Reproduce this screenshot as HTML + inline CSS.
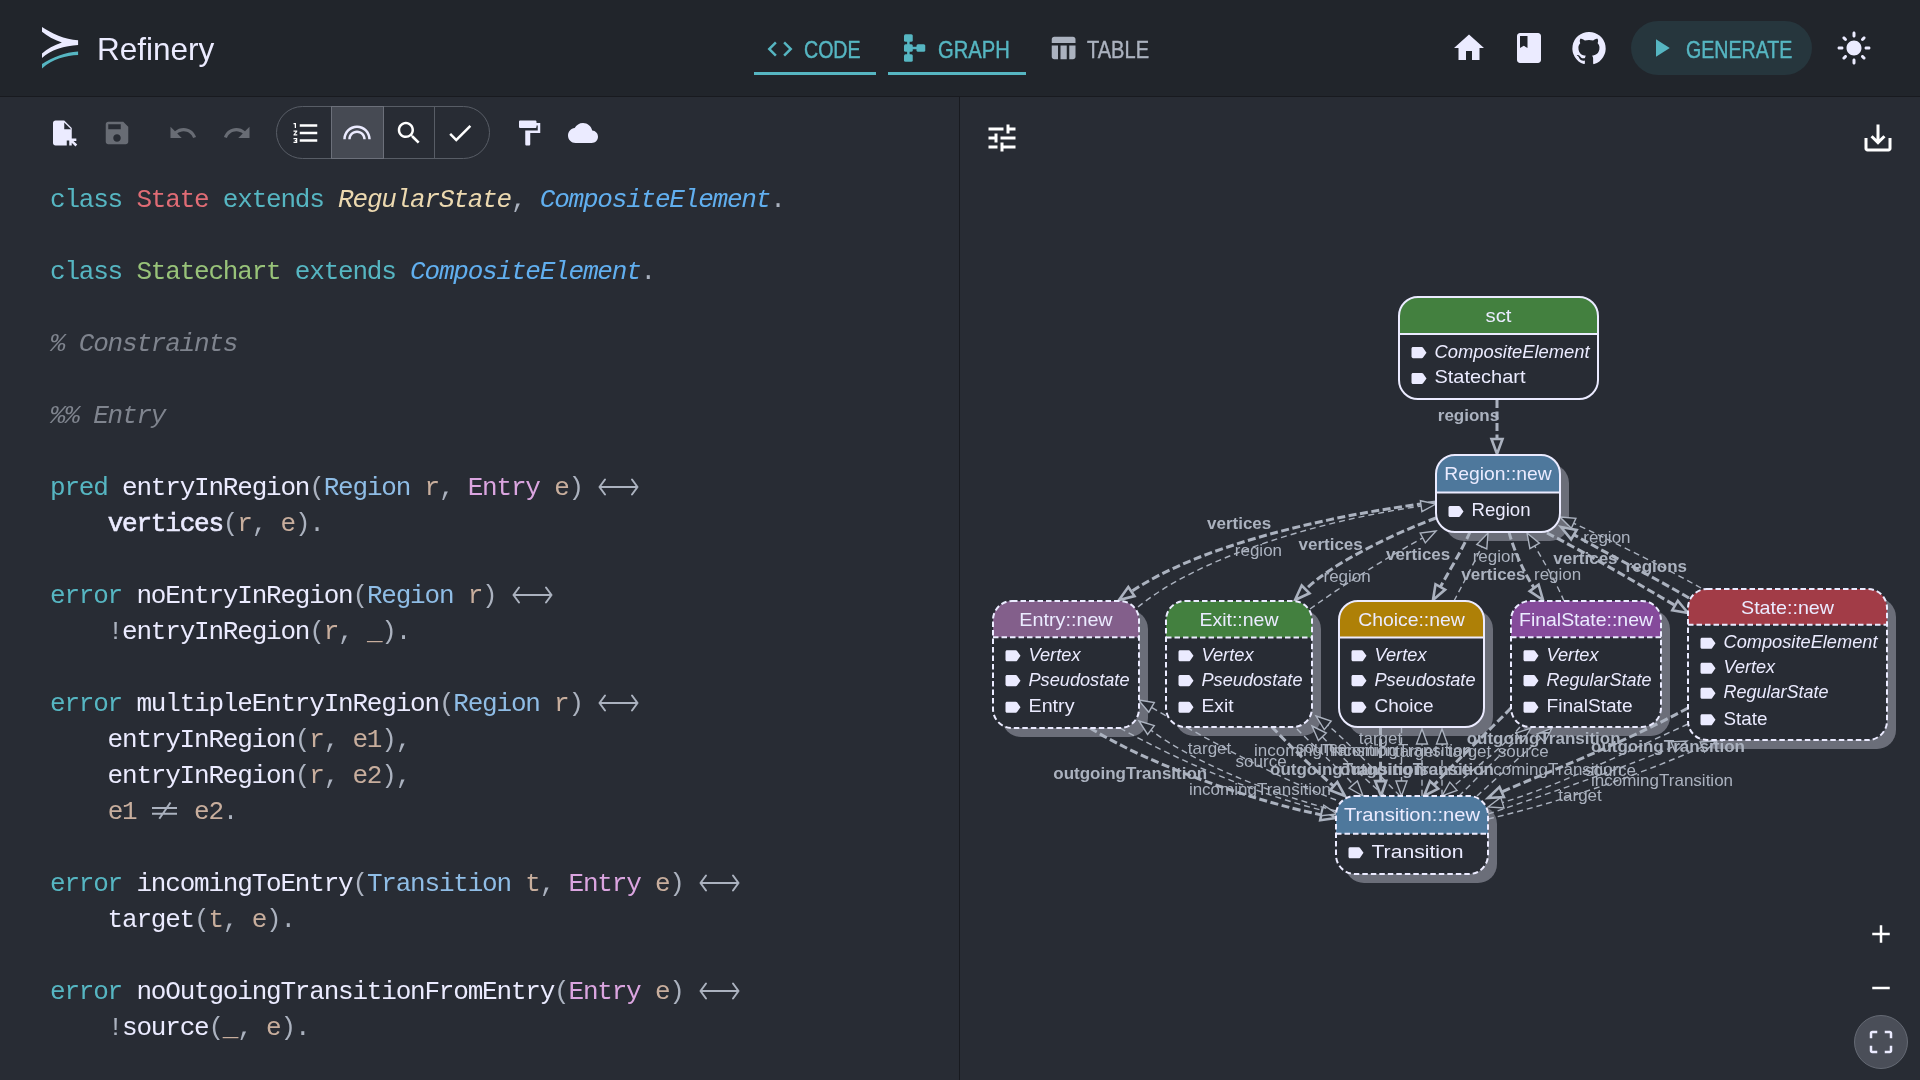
<!DOCTYPE html>
<html><head><meta charset="utf-8">
<style>
html,body{margin:0;padding:0;width:1920px;height:1080px;overflow:hidden;background:#282c34;}
body{position:relative;font-family:"Liberation Sans",sans-serif;color:#ebebff;}
#root{position:absolute;left:0;top:0;width:1920px;height:1080px;will-change:transform;background:#282c34;}
.abs{position:absolute;}
#hdr{position:absolute;left:0;top:0;width:1920px;height:96px;background:#21252b;}
#hdrline{position:absolute;left:0;top:96px;width:1920px;height:1px;background:#181a1f;}
#vdiv{position:absolute;left:959px;top:97px;width:1px;height:983px;background:#181a1f;}
svg.ic{position:absolute;overflow:visible;}
.tab{position:absolute;font-size:24px;-webkit-text-stroke:0.45px currentColor;white-space:pre;transform-origin:0 0;}
.code{position:absolute;left:50px;top:182px;font-family:"Liberation Mono",monospace;font-size:26px;letter-spacing:-1.2px;line-height:36px;white-space:pre;color:#ebebff;}
.code div{height:36px;}
.k{color:#56b6c2}.p{color:#c8ae9d}.g{color:#abb2bf}.c{color:#7f848e;font-style:italic}
.i{font-style:italic}
.arr{display:inline-block;width:43.2px;height:36px;vertical-align:top;position:relative;}
.arr svg{position:absolute;left:0;top:0;}
</style></head>
<body><div id="root">
<div id="hdr"></div>
<div id="hdrline"></div>
<div id="vdiv"></div>

<!-- logo -->
<svg class="ic" style="left:41px;top:26px" width="38" height="44" viewBox="0 0 38 44">
  <path d="M1 0.9C10 7 24 13.5 37.1 14.3L37.1 18.9C24 19.5 9 24 1 32.1L1 27.5C6 23 13 19 20.9 16.4C13 13.5 6 10 1 5.7Z" fill="#ebebff"/>
  <path d="M37.1 25.6L37.1 29.1C25 29.5 12 33 1 42.5L1 38.1C12 31 24 26.5 37.1 25.6Z" fill="#56b6c2"/>
</svg>
<div class="abs" style="left:97px;top:29.4px;font-size:31.5px;line-height:40px;color:#ebebff;white-space:pre">Refinery</div>

<!-- tabs -->
<svg class="ic" style="left:765px;top:34px" width="30" height="30" viewBox="0 0 24 24"><path fill="#56b6c2" d="M9.4 16.6L4.8 12l4.6-4.6L8 6l-6 6 6 6 1.4-1.4zm5.2 0l4.6-4.6-4.6-4.6L16 6l6 6-6 6-1.4-1.4z"/></svg>
<div class="tab" style="left:804px;top:35.5px;color:#56b6c2;transform:scaleX(0.815)">CODE</div>
<div class="abs" style="left:754px;top:72px;width:122px;height:3px;background:#56b6c2"></div>
<svg class="ic" style="left:899px;top:33px" width="30" height="30" viewBox="0 0 24 24"><g fill="#56b6c2"><rect x="4" y="1" width="7" height="6" rx="1.2"/><rect x="4" y="9" width="7" height="6" rx="1.2"/><rect x="4" y="17" width="7" height="6" rx="1.2"/><rect x="14" y="9" width="7" height="6" rx="1.2"/><rect x="6.5" y="6" width="2" height="12"/><rect x="10" y="11" width="5" height="2"/></g></svg>
<div class="tab" style="left:938px;top:35.5px;color:#56b6c2;transform:scaleX(0.84)">GRAPH</div>
<div class="abs" style="left:888px;top:72px;width:138px;height:3px;background:#56b6c2"></div>
<svg class="ic" style="left:1048px;top:33px" width="30" height="30" viewBox="0 0 24 24"><path fill="#abb2bf" d="M10 10.02h5V21h-5zM17 21h3c1.1 0 2-.9 2-2v-9h-5v11zm3-18H5c-1.1 0-2 .9-2 2v3h19V5c0-1.1-.9-2-2-2zM3 19c0 1.1.9 2 2 2h3V10H3v9z"/></svg>
<div class="tab" style="left:1087px;top:35.5px;color:#abb2bf;transform:scaleX(0.835)">TABLE</div>

<!-- right header icons -->
<svg class="ic" style="left:1451px;top:30px" width="36" height="36" viewBox="0 0 24 24"><path fill="#ebebff" d="M10 20v-6h4v6h5v-8h3L12 3 2 12h3v8z"/></svg>
<svg class="ic" style="left:1511px;top:30px" width="36" height="36" viewBox="0 0 24 24"><path fill="#ebebff" fill-rule="evenodd" d="M18 2H6c-1.1 0-2 .9-2 2v16c0 1.1.9 2 2 2h12c1.1 0 2-.9 2-2V4c0-1.1-.9-2-2-2zM6 4h5v8l-2.5-1.5L6 12V4z"/></svg>
<svg class="ic" style="left:1571px;top:30px" width="36" height="36" viewBox="0 0 24 24"><path fill="#ebebff" d="M12 1.27a11 11 0 00-3.48 21.46c.55.09.73-.24.73-.53v-1.85c-3.03.64-3.67-1.46-3.67-1.46-.55-1.29-1.28-1.65-1.28-1.65-.92-.65.1-.65.1-.65 1.1 0 1.73 1.1 1.73 1.1.92 1.65 2.57 1.2 3.21.92a2 2 0 01.64-1.47c-2.47-.27-5.04-1.19-5.04-5.5 0-1.1.46-2.1 1.2-2.84a3.76 3.76 0 010-2.93s.91-.28 3.11 1.1c1.8-.49 3.7-.49 5.5 0 2.1-1.38 3.02-1.1 3.02-1.1a3.76 3.76 0 010 2.93c.83.74 1.2 1.74 1.2 2.94 0 4.21-2.57 5.13-5.04 5.4.45.37.82.92.82 2.02v3.03c0 .27.1.64.73.55A11 11 0 0012 1.27"/></svg>
<div class="abs" style="left:1631px;top:21px;width:181px;height:54px;border-radius:27px;background:#26363d"></div>
<svg class="ic" style="left:1646px;top:33px" width="30" height="30" viewBox="0 0 24 24"><path fill="#56b6c2" d="M8 5v14l11-7z"/></svg>
<div class="tab" style="left:1686px;top:35.5px;color:#56b6c2;transform:scaleX(0.817)">GENERATE</div>
<svg class="ic" style="left:1836px;top:30px" width="36" height="36" viewBox="0 0 24 24"><path fill="#ebebff" d="M12 7c-2.76 0-5 2.24-5 5s2.24 5 5 5 5-2.24 5-5-2.24-5-5-5zM2 13h2c.55 0 1-.45 1-1s-.45-1-1-1H2c-.55 0-1 .45-1 1s.45 1 1 1zm18 0h2c.55 0 1-.45 1-1s-.45-1-1-1h-2c-.55 0-1 .45-1 1s.45 1 1 1zM11 2v2c0 .55.45 1 1 1s1-.45 1-1V2c0-.55-.45-1-1-1s-1 .45-1 1zm0 18v2c0 .55.45 1 1 1s1-.45 1-1v-2c0-.55-.45-1-1-1s-1 .45-1 1zM5.99 4.58c-.39-.39-1.03-.39-1.41 0-.39.39-.39 1.03 0 1.41l1.06 1.06c.39.39 1.03.39 1.41 0s.39-1.03 0-1.41L5.990 4.58zm12.37 12.37c-.39-.39-1.030-.39-1.41 0-.39.39-.39 1.03 0 1.41l1.06 1.06c.39.39 1.03.39 1.41 0 .39-.39.39-1.03 0-1.41l-1.06-1.06zm1.06-10.96c.39-.39.39-1.03 0-1.41-.39-.39-1.03-.39-1.41 0l-1.06 1.06c-.39.39-.39 1.03 0 1.41s1.03.39 1.41 0l1.06-1.06zM7.05 18.36c.39-.39.39-1.03 0-1.41-.39-.39-1.03-.39-1.41 0l-1.06 1.06c-.39.39-.39 1.03 0 1.41s1.03.39 1.41 0l1.06-1.06z"/></svg>

<!-- editor toolbar -->
<svg class="ic" style="left:48px;top:118px" width="30" height="30" viewBox="0 0 24 24"><path fill="#ebebff" fill-rule="evenodd" d="M15 2H6c-1.1 0-2 .9-2 2v16c0 1.1.89 2 1.99 2H15v-4h4V8l-6-6zM13 9V3.5L18.5 9H13z"/><path fill="#ebebff" d="M17 16.34h5.66v2h-2.24l2.95 2.95-1.41 1.41L19 19.76V22h-2z"/></svg>
<svg class="ic" style="left:102px;top:118px" width="30" height="30" viewBox="0 0 24 24"><path fill="#686c74" d="M17 3H5c-1.11 0-2 .9-2 2v14c0 1.1.89 2 2 2h14c1.1 0 2-.9 2-2V7l-4-4zm-5 16c-1.66 0-3-1.34-3-3s1.34-3 3-3 3 1.34 3 3-1.34 3-3 3zm3-10H5V5h10v4z"/></svg>
<svg class="ic" style="left:168px;top:118px" width="30" height="30" viewBox="0 0 24 24"><path fill="#686c74" d="M12.5 8c-2.65 0-5.05.99-6.9 2.6L2 7v9h9l-3.62-3.62c1.39-1.16 3.160-1.88 5.12-1.88 3.54 0 6.55 2.31 7.6 5.5l2.37-.78C21.08 11.03 17.15 8 12.5 8z"/></svg>
<svg class="ic" style="left:222px;top:118px" width="30" height="30" viewBox="0 0 24 24"><path fill="#686c74" d="M18.4 10.6C16.55 8.99 14.15 8 11.5 8c-4.65 0-8.58 3.03-9.96 7.22L3.9 16c1.05-3.19 4.05-5.5 7.6-5.5 1.95 0 3.73.72 5.12 1.88L13 16h9V7l-3.6 3.6z"/></svg>
<!-- toggle group -->
<div class="abs" style="left:276px;top:106px;width:212px;height:51px;border:1px solid #585d66;border-radius:27px;"></div>
<div class="abs" style="left:331px;top:106px;width:51px;height:51px;background:#464a53;border:1px solid #6c707a;"></div>
<div class="abs" style="left:434px;top:107px;width:1px;height:51px;background:#585d66;"></div>
<svg class="ic" style="left:291px;top:118px" width="30" height="30" viewBox="0 0 24 24"><path fill="#ffffff" d="M2 17h2v.5H3v1h1v.5H2v1h3v-4H2v1zm1-9h1V4H2v1h1v3zm-1 3h1.8L2 13.1v.9h3v-1H3.2L5 10.9V10H2v1zm5-6v2h14V5H7zm0 14h14v-2H7v2zm0-6h14v-2H7v2z"/></svg>
<svg class="ic" style="left:342px;top:118px" width="30" height="30" viewBox="0 0 24 24"><path fill="#ebebff" d="M12 10c-3.86 0-7 3.14-7 7h2c0-2.76 2.24-5 5-5s5 2.24 5 5h2c0-3.86-3.14-7-7-7zm0-4C5.93 6 1 10.93 1 17h2c0-4.96 4.04-9 9-9s9 4.04 9 9h2c0-6.070-4.93-11-11-11z"/></svg>
<svg class="ic" style="left:394px;top:118px" width="30" height="30" viewBox="0 0 24 24"><path fill="#ffffff" d="M15.5 14h-.79l-.28-.27C15.41 12.59 16 11.11 16 9.5 16 5.91 13.09 3 9.5 3S3 5.91 3 9.5 5.91 16 9.5 16c1.61 0 3.09-.59 4.23-1.57l.27.28v.79l5 4.99L20.49 19l-4.99-5zm-6 0C7.01 14 5 11.99 5 9.5S7.01 5 9.5 5 14 7.01 14 9.5 11.99 14 9.5 14z"/></svg>
<svg class="ic" style="left:445px;top:118px" width="30" height="30" viewBox="0 0 24 24"><path fill="#ffffff" d="M9 16.17L4.83 12l-1.42 1.41L9 19 21 7l-1.41-1.41z"/></svg>
<svg class="ic" style="left:514px;top:118px" width="30" height="30" viewBox="0 0 24 24"><path fill="#ebebff" d="M18 4V3c0-.55-.45-1-1-1H5c-.55 0-1 .45-1 1v4c0 .55.45 1 1 1h12c.55 0 1-.45 1-1V6h1v4H9v11c0 .55.45 1 1 1h2c.55 0 1-.45 1-1v-9h8V4h-3z"/></svg>
<svg class="ic" style="left:568px;top:118px" width="30" height="30" viewBox="0 0 24 24"><path fill="#ebebff" d="M19.35 10.04C18.67 6.59 15.64 4 12 4 9.11 4 6.6 5.64 5.35 8.04 2.34 8.36 0 10.91 0 14c0 3.31 2.69 6 6 6h13c2.76 0 5-2.24 5-5 0-2.64-2.05-4.78-4.65-4.96z"/></svg>

<!--CODE-->
<div class="code"><div><span class="k">class</span> <span style="color:#e06c75">State</span> <span class="k">extends</span> <span class="i" style="color:#ecd9b0">RegularState</span><span class="g">,</span> <span class="i" style="color:#61afef">CompositeElement</span><span class="g">.</span></div><div></div><div><span class="k">class</span> <span style="color:#98c379">Statechart</span> <span class="k">extends</span> <span class="i" style="color:#61afef">CompositeElement</span><span class="g">.</span></div><div></div><div><span class="c">% Constraints</span></div><div></div><div><span class="c">%% Entry</span></div><div></div><div><span class="k">pred</span> entryInRegion<span class="g">(</span><span style="color:#8fbde6">Region</span> <span class="p">r</span><span class="g">,</span> <span style="color:#dba5e0">Entry</span> <span class="p">e</span><span class="g">)</span> <span class="arr"><svg width="43" height="36" viewBox="0 0 43 36"><path d="M2.5 17H40.5M8 9.5L2.5 17L8 24.5M35 9.5L40.5 17L35 24.5" fill="none" stroke="#abb2bf" stroke-width="2" stroke-linejoin="round" stroke-linecap="round"/></svg></span></div><div>    <span style="-webkit-text-stroke:0.6px #ebebff">vertices</span><span class="g">(</span><span class="p">r</span><span class="g">,</span> <span class="p">e</span><span class="g">).</span></div><div></div><div><span class="k">error</span> noEntryInRegion<span class="g">(</span><span style="color:#8fbde6">Region</span> <span class="p">r</span><span class="g">)</span> <span class="arr"><svg width="43" height="36" viewBox="0 0 43 36"><path d="M2.5 17H40.5M8 9.5L2.5 17L8 24.5M35 9.5L40.5 17L35 24.5" fill="none" stroke="#abb2bf" stroke-width="2" stroke-linejoin="round" stroke-linecap="round"/></svg></span></div><div>    <span class="g">!</span>entryInRegion<span class="g">(</span><span class="p">r</span><span class="g">,</span> <span class="p">_</span><span class="g">).</span></div><div></div><div><span class="k">error</span> multipleEntryInRegion<span class="g">(</span><span style="color:#8fbde6">Region</span> <span class="p">r</span><span class="g">)</span> <span class="arr"><svg width="43" height="36" viewBox="0 0 43 36"><path d="M2.5 17H40.5M8 9.5L2.5 17L8 24.5M35 9.5L40.5 17L35 24.5" fill="none" stroke="#abb2bf" stroke-width="2" stroke-linejoin="round" stroke-linecap="round"/></svg></span></div><div>    entryInRegion<span class="g">(</span><span class="p">r</span><span class="g">,</span> <span class="p">e1</span><span class="g">),</span></div><div>    entryInRegion<span class="g">(</span><span class="p">r</span><span class="g">,</span> <span class="p">e2</span><span class="g">),</span></div><div>    <span class="p">e1</span> <span class="arr" style="width:28.8px"><svg width="29" height="36" viewBox="0 0 29 36"><path d="M1 14H26M1 19.8H26M19.5 8.5L8.3 24.8" fill="none" stroke="#abb2bf" stroke-width="2"/></svg></span> <span class="p">e2</span><span class="g">.</span></div><div></div><div><span class="k">error</span> incomingToEntry<span class="g">(</span><span style="color:#8fbde6">Transition</span> <span class="p">t</span><span class="g">,</span> <span style="color:#dba5e0">Entry</span> <span class="p">e</span><span class="g">)</span> <span class="arr"><svg width="43" height="36" viewBox="0 0 43 36"><path d="M2.5 17H40.5M8 9.5L2.5 17L8 24.5M35 9.5L40.5 17L35 24.5" fill="none" stroke="#abb2bf" stroke-width="2" stroke-linejoin="round" stroke-linecap="round"/></svg></span></div><div>    target<span class="g">(</span><span class="p">t</span><span class="g">,</span> <span class="p">e</span><span class="g">).</span></div><div></div><div><span class="k">error</span> noOutgoingTransitionFromEntry<span class="g">(</span><span style="color:#dba5e0">Entry</span> <span class="p">e</span><span class="g">)</span> <span class="arr"><svg width="43" height="36" viewBox="0 0 43 36"><path d="M2.5 17H40.5M8 9.5L2.5 17L8 24.5M35 9.5L40.5 17L35 24.5" fill="none" stroke="#abb2bf" stroke-width="2" stroke-linejoin="round" stroke-linecap="round"/></svg></span></div><div>    <span class="g">!</span>source<span class="g">(</span><span class="p">_</span><span class="g">,</span> <span class="p">e</span><span class="g">).</span></div></div>
<!-- graph panel controls -->
<svg class="ic" style="left:984px;top:120px" width="36" height="36" viewBox="0 0 24 24"><path fill="#ffffff" d="M3 17v2h6v-2H3zM3 5v2h10V5H3zm10 16v-2h8v-2h-8v-2h-2v6h2zM7 9v2H3v2h4v2h2V9H7zm14 4v-2H11v2h10zm-6-4h2V7h4V5h-4V3h-2v6z"/></svg>
<svg class="ic" style="left:1860px;top:120px" width="36" height="36" viewBox="0 0 24 24"><path fill="#ffffff" d="M19 12v7H5v-7H3v7c0 1.1.9 2 2 2h14c1.1 0 2-.9 2-2v-7h-2zm-6 .67l2.59-2.58L17 11.5l-5 5-5-5 1.41-1.41L11 12.67V3h2z"/></svg>
<svg class="ic" style="left:1866px;top:919px" width="30" height="30" viewBox="0 0 24 24"><path fill="#ffffff" d="M19 13h-6v6h-2v-6H5v-2h6V5h2v6h6v2z"/></svg>
<svg class="ic" style="left:1866px;top:973px" width="30" height="30" viewBox="0 0 24 24"><path fill="#ffffff" d="M19 13H5v-2h14v2z"/></svg>
<div class="abs" style="left:1854px;top:1015px;width:52px;height:52px;border-radius:50%;background:#4a4e58;border:1px solid #656a74"></div>
<svg class="ic" style="left:1866px;top:1027px" width="30" height="30" viewBox="0 0 24 24"><path fill="#ebebff" d="M3 5v4h2V5h4V3H5c-1.1 0-2 .9-2 2zm2 10H3v4c0 1.1.9 2 2 2h4v-2H5v-4zm14 4h-4v2h4c1.1 0 2-.9 2-2v-4h-2v4zm0-16h-4v2h4v4h2V5c0-1.1-.9-2-2-2z"/></svg>

<!--GRAPH-->
<svg class="abs" style="left:0;top:0" width="1920" height="1080" viewBox="0 0 1920 1080">
<style>.nt{font-family:"Liberation Sans",sans-serif;font-size:18.5px;fill:#ebebff} .nr{font-family:"Liberation Sans",sans-serif;font-size:18.5px;fill:#ebebff} .it{font-style:italic}
.el{font-family:"Liberation Sans",sans-serif;font-size:17px;fill:#abb2bf} .eb{font-weight:bold}</style>
<path d="M1464 464H1550A19 19 0 0 1 1569 483V522A19 19 0 0 1 1550 541H1464A19 19 0 0 1 1445 522V483A19 19 0 0 1 1464 464Z" fill="#6b6e79"/>
<path d="M1021 610H1129A19 19 0 0 1 1148 629V718A19 19 0 0 1 1129 737H1021A19 19 0 0 1 1002 718V629A19 19 0 0 1 1021 610Z" fill="#6b6e79"/>
<path d="M1194 610H1302A19 19 0 0 1 1321 629V717A19 19 0 0 1 1302 736H1194A19 19 0 0 1 1175 717V629A19 19 0 0 1 1194 610Z" fill="#6b6e79"/>
<path d="M1367 610H1474A19 19 0 0 1 1493 629V717A19 19 0 0 1 1474 736H1367A19 19 0 0 1 1348 717V629A19 19 0 0 1 1367 610Z" fill="#6b6e79"/>
<path d="M1539 610H1651A19 19 0 0 1 1670 629V717A19 19 0 0 1 1651 736H1539A19 19 0 0 1 1520 717V629A19 19 0 0 1 1539 610Z" fill="#6b6e79"/>
<path d="M1716 598H1877A19 19 0 0 1 1896 617V730A19 19 0 0 1 1877 749H1716A19 19 0 0 1 1697 730V617A19 19 0 0 1 1716 598Z" fill="#6b6e79"/>
<path d="M1364 805H1478A19 19 0 0 1 1497 824V864A19 19 0 0 1 1478 883H1364A19 19 0 0 1 1345 864V824A19 19 0 0 1 1364 805Z" fill="#6b6e79"/>
<path d="M1497 400C1497 420 1497 430 1497.0 439.0" fill="none" stroke="#abb2bf" stroke-width="3" stroke-dasharray="8 3.5"/>
<path d="M1497 454L1491.5 439.0L1502.5 439.0Z" fill="#282c34" stroke="#abb2bf" stroke-width="2.6" stroke-linejoin="miter"/>
<path d="M1436 502C1330 515 1200 545 1131.4 591.6" fill="none" stroke="#abb2bf" stroke-width="3" stroke-dasharray="8 3.5"/>
<path d="M1119 600L1128.3 587.0L1134.5 596.1Z" fill="#282c34" stroke="#abb2bf" stroke-width="2.6" stroke-linejoin="miter"/>
<path d="M1138 607C1195 560 1310 522 1421.2 506.1" fill="none" stroke="#abb2bf" stroke-width="1.4" stroke-dasharray="6 4"/>
<path d="M1436 504L1421.9 511.6L1420.4 500.7Z" fill="#282c34" stroke="#abb2bf" stroke-width="1.4" stroke-linejoin="miter"/>
<path d="M1436 518C1390 535 1330 565 1305.6 589.4" fill="none" stroke="#abb2bf" stroke-width="3" stroke-dasharray="8 3.5"/>
<path d="M1295 600L1301.7 585.5L1309.5 593.3Z" fill="#282c34" stroke="#abb2bf" stroke-width="2.6" stroke-linejoin="miter"/>
<path d="M1310 609C1350 580 1400 550 1422.7 538.0" fill="none" stroke="#abb2bf" stroke-width="1.4" stroke-dasharray="6 4"/>
<path d="M1436 531L1425.3 542.9L1420.2 533.1Z" fill="#282c34" stroke="#abb2bf" stroke-width="1.4" stroke-linejoin="miter"/>
<path d="M1470 532C1462 550 1447 575 1440.3 586.9" fill="none" stroke="#abb2bf" stroke-width="3" stroke-dasharray="8 3.5"/>
<path d="M1433 600L1435.5 584.2L1445.1 589.6Z" fill="#282c34" stroke="#abb2bf" stroke-width="2.6" stroke-linejoin="miter"/>
<path d="M1454 601C1465 580 1478 555 1481.8 546.7" fill="none" stroke="#abb2bf" stroke-width="1.4" stroke-dasharray="6 4"/>
<path d="M1488 533L1486.8 548.9L1476.8 544.4Z" fill="#282c34" stroke="#abb2bf" stroke-width="1.4" stroke-linejoin="miter"/>
<path d="M1509 532C1514 552 1527 578 1534.2 587.9" fill="none" stroke="#abb2bf" stroke-width="3" stroke-dasharray="8 3.5"/>
<path d="M1543 600L1529.7 591.1L1538.6 584.6Z" fill="#282c34" stroke="#abb2bf" stroke-width="2.6" stroke-linejoin="miter"/>
<path d="M1564 601C1555 580 1540 555 1534.6 545.9" fill="none" stroke="#abb2bf" stroke-width="1.4" stroke-dasharray="6 4"/>
<path d="M1527 533L1539.4 543.1L1529.9 548.7Z" fill="#282c34" stroke="#abb2bf" stroke-width="1.4" stroke-linejoin="miter"/>
<path d="M1547 533C1590 555 1640 585 1675.0 605.4" fill="none" stroke="#abb2bf" stroke-width="3" stroke-dasharray="8 3.5"/>
<path d="M1688 613L1672.3 610.2L1677.8 600.7Z" fill="#282c34" stroke="#abb2bf" stroke-width="2.6" stroke-linejoin="miter"/>
<path d="M1689 598C1650 575 1600 550 1573.9 534.6" fill="none" stroke="#abb2bf" stroke-width="3" stroke-dasharray="8 3.5"/>
<path d="M1561 527L1576.7 529.9L1571.1 539.4Z" fill="#282c34" stroke="#abb2bf" stroke-width="2.6" stroke-linejoin="miter"/>
<path d="M1701 588C1660 565 1610 540 1573.6 523.3" fill="none" stroke="#abb2bf" stroke-width="1.4" stroke-dasharray="6 4"/>
<path d="M1560 517L1575.9 518.3L1571.3 528.3Z" fill="#282c34" stroke="#abb2bf" stroke-width="1.4" stroke-linejoin="miter"/>
<path d="M1090 728C1150 765 1250 800 1321.3 814.9" fill="none" stroke="#abb2bf" stroke-width="3" stroke-dasharray="8 3.5"/>
<path d="M1336 818L1320.2 820.3L1322.4 809.5Z" fill="#282c34" stroke="#abb2bf" stroke-width="2.6" stroke-linejoin="miter"/>
<path d="M1120 728C1180 762 1260 795 1322.4 810.4" fill="none" stroke="#abb2bf" stroke-width="1.4" stroke-dasharray="6 4"/>
<path d="M1337 814L1321.1 815.7L1323.8 805.1Z" fill="#282c34" stroke="#abb2bf" stroke-width="1.4" stroke-linejoin="miter"/>
<path d="M1336 811C1260 790 1190 760 1150.9 730.1" fill="none" stroke="#abb2bf" stroke-width="1.4" stroke-dasharray="6 4"/>
<path d="M1139 721L1154.3 725.7L1147.6 734.5Z" fill="#282c34" stroke="#abb2bf" stroke-width="1.4" stroke-linejoin="miter"/>
<path d="M1336 800C1270 775 1200 735 1151.5 707.4" fill="none" stroke="#abb2bf" stroke-width="1.4" stroke-dasharray="6 4"/>
<path d="M1138.5 700L1154.3 702.6L1148.8 712.2Z" fill="#282c34" stroke="#abb2bf" stroke-width="1.4" stroke-linejoin="miter"/>
<path d="M1272 727C1290 746 1315 770 1333.7 786.2" fill="none" stroke="#abb2bf" stroke-width="3" stroke-dasharray="8 3.5"/>
<path d="M1345 796L1330.1 790.3L1337.3 782.0Z" fill="#282c34" stroke="#abb2bf" stroke-width="2.6" stroke-linejoin="miter"/>
<path d="M1297 729C1320 752 1345 775 1353.2 784.6" fill="none" stroke="#abb2bf" stroke-width="1.4" stroke-dasharray="6 4"/>
<path d="M1363 796L1349.1 788.2L1357.4 781.0Z" fill="#282c34" stroke="#abb2bf" stroke-width="1.4" stroke-linejoin="miter"/>
<path d="M1385 796C1360 775 1335 750 1322.4 736.8" fill="none" stroke="#abb2bf" stroke-width="1.4" stroke-dasharray="6 4"/>
<path d="M1312 726L1326.3 733.0L1318.4 740.6Z" fill="#282c34" stroke="#abb2bf" stroke-width="1.4" stroke-linejoin="miter"/>
<path d="M1400 796C1370 765 1340 735 1327.8 725.3" fill="none" stroke="#abb2bf" stroke-width="1.4" stroke-dasharray="6 4"/>
<path d="M1316 716L1331.2 721.0L1324.3 729.6Z" fill="#282c34" stroke="#abb2bf" stroke-width="1.4" stroke-linejoin="miter"/>
<path d="M1380.5 727C1380.5 750 1380.5 770 1380.7 781.0" fill="none" stroke="#abb2bf" stroke-width="3" stroke-dasharray="8 3.5"/>
<path d="M1381 796L1375.2 781.1L1386.2 780.9Z" fill="#282c34" stroke="#abb2bf" stroke-width="2.6" stroke-linejoin="miter"/>
<path d="M1401.5 727C1401.5 750 1401.5 770 1401.5 781.0" fill="none" stroke="#abb2bf" stroke-width="1.4" stroke-dasharray="6 4"/>
<path d="M1401.5 796L1396.0 781.0L1407.0 781.0Z" fill="#282c34" stroke="#abb2bf" stroke-width="1.4" stroke-linejoin="miter"/>
<path d="M1422 796C1422 770 1422 750 1422.0 744.0" fill="none" stroke="#abb2bf" stroke-width="1.4" stroke-dasharray="6 4"/>
<path d="M1422 729L1427.5 744.0L1416.5 744.0Z" fill="#282c34" stroke="#abb2bf" stroke-width="1.4" stroke-linejoin="miter"/>
<path d="M1442 796C1442 770 1442 750 1442.0 744.0" fill="none" stroke="#abb2bf" stroke-width="1.4" stroke-dasharray="6 4"/>
<path d="M1442 729L1447.5 744.0L1436.5 744.0Z" fill="#282c34" stroke="#abb2bf" stroke-width="1.4" stroke-linejoin="miter"/>
<path d="M1511 708C1490 730 1455 762 1434.1 784.9" fill="none" stroke="#abb2bf" stroke-width="3" stroke-dasharray="8 3.5"/>
<path d="M1424 796L1430.0 781.2L1438.2 788.6Z" fill="#282c34" stroke="#abb2bf" stroke-width="2.6" stroke-linejoin="miter"/>
<path d="M1520 727C1500 750 1470 772 1453.4 786.2" fill="none" stroke="#abb2bf" stroke-width="1.4" stroke-dasharray="6 4"/>
<path d="M1442 796L1449.8 782.1L1457.0 790.4Z" fill="#282c34" stroke="#abb2bf" stroke-width="1.4" stroke-linejoin="miter"/>
<path d="M1459 796C1480 775 1510 745 1519.3 737.4" fill="none" stroke="#abb2bf" stroke-width="1.4" stroke-dasharray="6 4"/>
<path d="M1531 728L1522.8 741.7L1515.9 733.2Z" fill="#282c34" stroke="#abb2bf" stroke-width="1.4" stroke-linejoin="miter"/>
<path d="M1477 796C1500 775 1530 748 1540.9 738.1" fill="none" stroke="#abb2bf" stroke-width="1.4" stroke-dasharray="6 4"/>
<path d="M1552 728L1544.6 742.2L1537.2 734.0Z" fill="#282c34" stroke="#abb2bf" stroke-width="1.4" stroke-linejoin="miter"/>
<path d="M1688 708C1620 745 1540 775 1501.7 791.9" fill="none" stroke="#abb2bf" stroke-width="3" stroke-dasharray="8 3.5"/>
<path d="M1488 798L1499.5 786.9L1503.9 797.0Z" fill="#282c34" stroke="#abb2bf" stroke-width="2.6" stroke-linejoin="miter"/>
<path d="M1688 724C1620 755 1560 785 1502.3 802.6" fill="none" stroke="#abb2bf" stroke-width="1.4" stroke-dasharray="6 4"/>
<path d="M1488 807L1500.7 797.4L1504.0 807.9Z" fill="#282c34" stroke="#abb2bf" stroke-width="1.4" stroke-linejoin="miter"/>
<path d="M1488 814C1560 790 1630 765 1673.2 746.8" fill="none" stroke="#abb2bf" stroke-width="1.4" stroke-dasharray="6 4"/>
<path d="M1687 741L1675.3 751.9L1671.0 741.8Z" fill="#282c34" stroke="#abb2bf" stroke-width="1.4" stroke-linejoin="miter"/>
<path d="M1488 819C1570 800 1650 770 1702.3 747.0" fill="none" stroke="#abb2bf" stroke-width="1.4" stroke-dasharray="6 4"/>
<path d="M1716 741L1704.5 752.1L1700.1 742.0Z" fill="#282c34" stroke="#abb2bf" stroke-width="1.4" stroke-linejoin="miter"/>
<text x="1437.8" y="420.8" class="el eb">regions</text>
<text x="1207" y="529.3" class="el eb">vertices</text>
<text x="1234.8" y="556.4" class="el">region</text>
<text x="1298.5" y="549.6" class="el eb">vertices</text>
<text x="1323.5" y="582" class="el">region</text>
<text x="1386" y="559.6" class="el eb">vertices</text>
<text x="1472.7" y="561.7" class="el">region</text>
<text x="1461.25" y="580.4" class="el eb">vertices</text>
<text x="1553.3" y="564.4" class="el eb">vertices</text>
<text x="1534" y="580.4" class="el">region</text>
<text x="1583.3" y="543.3" class="el">region</text>
<text x="1625.6" y="572.2" class="el eb">regions</text>
<text x="1053.3" y="779.4" class="el eb">outgoingTransition</text>
<text x="1187.8" y="754.4" class="el">target</text>
<text x="1235.6" y="767.2" class="el">source</text>
<text x="1188.9" y="795" class="el">incomingTransition</text>
<text x="1254" y="755.8" class="el">incomingTransition</text>
<text x="1296" y="753" class="el">source</text>
<text x="1270" y="774.5" class="el eb">outgoingTransition</text>
<text x="1358.75" y="744" class="el">target</text>
<text x="1330" y="755.8" class="el">incomingTransition</text>
<text x="1340" y="774.5" class="el eb">outgoingTransition</text>
<text x="1395" y="757" class="el">target</text>
<text x="1420" y="774.5" class="el">source</text>
<text x="1466.7" y="743.9" class="el eb">outgoingTransition</text>
<text x="1447.8" y="757.2" class="el">target</text>
<text x="1497.8" y="757.2" class="el">source</text>
<text x="1480" y="775" class="el">incomingTransition</text>
<text x="1591" y="752.2" class="el eb">outgoingTransition</text>
<text x="1585" y="775.6" class="el">source</text>
<text x="1591" y="785.6" class="el">incomingTransition</text>
<text x="1558.3" y="800.6" class="el">target</text>
<path d="M1418 297H1579A19 19 0 0 1 1598 316V380A19 19 0 0 1 1579 399H1418A19 19 0 0 1 1399 380V316A19 19 0 0 1 1418 297Z" fill="#282c34"/>
<path d="M1399 334V316A19 19 0 0 1 1418 297H1579A19 19 0 0 1 1598 316V334Z" fill="#43803f"/>
<text x="1498.5" y="322" text-anchor="middle" textLength="26" lengthAdjust="spacingAndGlyphs" class="nt">sct</text>
<path transform="translate(1409.13,343.15) scale(0.79)" d="M17.63 5.84C17.27 5.33 16.67 5 16 5L5 5.01C3.9 5.01 3 5.9 3 7v10c0 1.1.9 1.99 2 1.99L16 19c.67 0 1.27-.33 1.63-.84L22 12l-4.37-6.16z" fill="#ebebff"/>
<text x="1434.5" y="357.6" textLength="155" lengthAdjust="spacingAndGlyphs" class="nr it">CompositeElement</text>
<path transform="translate(1409.13,368.95) scale(0.79)" d="M17.63 5.84C17.27 5.33 16.67 5 16 5L5 5.01C3.9 5.01 3 5.9 3 7v10c0 1.1.9 1.99 2 1.99L16 19c.67 0 1.27-.33 1.63-.84L22 12l-4.37-6.16z" fill="#ebebff"/>
<text x="1434.5" y="383.4" textLength="91" lengthAdjust="spacingAndGlyphs" class="nr">Statechart</text>
<path d="M1399 334H1598" stroke="#ebebff" stroke-width="2"/>
<path d="M1418 297H1579A19 19 0 0 1 1598 316V380A19 19 0 0 1 1579 399H1418A19 19 0 0 1 1399 380V316A19 19 0 0 1 1418 297Z" fill="none" stroke="#ebebff" stroke-width="2"/>
<path d="M1455 455H1541A19 19 0 0 1 1560 474V513A19 19 0 0 1 1541 532H1455A19 19 0 0 1 1436 513V474A19 19 0 0 1 1455 455Z" fill="#282c34"/>
<path d="M1436 492.4V474A19 19 0 0 1 1455 455H1541A19 19 0 0 1 1560 474V492.4Z" fill="#4e789c"/>
<text x="1498.0" y="480" text-anchor="middle" textLength="107.4" lengthAdjust="spacingAndGlyphs" class="nt">Region::new</text>
<path transform="translate(1446.13,501.95) scale(0.79)" d="M17.63 5.84C17.27 5.33 16.67 5 16 5L5 5.01C3.9 5.01 3 5.9 3 7v10c0 1.1.9 1.99 2 1.99L16 19c.67 0 1.27-.33 1.63-.84L22 12l-4.37-6.16z" fill="#ebebff"/>
<text x="1471.5" y="516.4" textLength="59" lengthAdjust="spacingAndGlyphs" class="nr">Region</text>
<path d="M1436 492.4H1560" stroke="#ebebff" stroke-width="2"/>
<path d="M1455 455H1541A19 19 0 0 1 1560 474V513A19 19 0 0 1 1541 532H1455A19 19 0 0 1 1436 513V474A19 19 0 0 1 1455 455Z" fill="none" stroke="#ebebff" stroke-width="2"/>
<path d="M1012 601H1120A19 19 0 0 1 1139 620V709A19 19 0 0 1 1120 728H1012A19 19 0 0 1 993 709V620A19 19 0 0 1 1012 601Z" fill="#282c34"/>
<path d="M993 637.2V620A19 19 0 0 1 1012 601H1120A19 19 0 0 1 1139 620V637.2Z" fill="#835f8b"/>
<text x="1066.0" y="626" text-anchor="middle" textLength="93.3" lengthAdjust="spacingAndGlyphs" class="nt">Entry::new</text>
<path transform="translate(1003.13,646.35) scale(0.79)" d="M17.63 5.84C17.27 5.33 16.67 5 16 5L5 5.01C3.9 5.01 3 5.9 3 7v10c0 1.1.9 1.99 2 1.99L16 19c.67 0 1.27-.33 1.63-.84L22 12l-4.37-6.16z" fill="#ebebff"/>
<text x="1028.5" y="660.8" textLength="52" lengthAdjust="spacingAndGlyphs" class="nr it">Vertex</text>
<path transform="translate(1003.13,671.15) scale(0.79)" d="M17.63 5.84C17.27 5.33 16.67 5 16 5L5 5.01C3.9 5.01 3 5.9 3 7v10c0 1.1.9 1.99 2 1.99L16 19c.67 0 1.27-.33 1.63-.84L22 12l-4.37-6.16z" fill="#ebebff"/>
<text x="1028.5" y="685.6" textLength="101" lengthAdjust="spacingAndGlyphs" class="nr it">Pseudostate</text>
<path transform="translate(1003.13,697.75) scale(0.79)" d="M17.63 5.84C17.27 5.33 16.67 5 16 5L5 5.01C3.9 5.01 3 5.9 3 7v10c0 1.1.9 1.99 2 1.99L16 19c.67 0 1.27-.33 1.63-.84L22 12l-4.37-6.16z" fill="#ebebff"/>
<text x="1028.5" y="712.2" textLength="46" lengthAdjust="spacingAndGlyphs" class="nr">Entry</text>
<path d="M993 637.2H1139" stroke="#ebebff" stroke-width="2" stroke-dasharray="5.5 3"/>
<path d="M1012 601H1120A19 19 0 0 1 1139 620V709A19 19 0 0 1 1120 728H1012A19 19 0 0 1 993 709V620A19 19 0 0 1 1012 601Z" fill="none" stroke="#ebebff" stroke-width="2" stroke-dasharray="5.5 3"/>
<path d="M1185 601H1293A19 19 0 0 1 1312 620V708A19 19 0 0 1 1293 727H1185A19 19 0 0 1 1166 708V620A19 19 0 0 1 1185 601Z" fill="#282c34"/>
<path d="M1166 637.5V620A19 19 0 0 1 1185 601H1293A19 19 0 0 1 1312 620V637.5Z" fill="#43803f"/>
<text x="1239.0" y="626" text-anchor="middle" textLength="79" lengthAdjust="spacingAndGlyphs" class="nt">Exit::new</text>
<path transform="translate(1176.13,646.35) scale(0.79)" d="M17.63 5.84C17.27 5.33 16.67 5 16 5L5 5.01C3.9 5.01 3 5.9 3 7v10c0 1.1.9 1.99 2 1.99L16 19c.67 0 1.27-.33 1.63-.84L22 12l-4.37-6.16z" fill="#ebebff"/>
<text x="1201.5" y="660.8" textLength="52" lengthAdjust="spacingAndGlyphs" class="nr it">Vertex</text>
<path transform="translate(1176.13,671.15) scale(0.79)" d="M17.63 5.84C17.27 5.33 16.67 5 16 5L5 5.01C3.9 5.01 3 5.9 3 7v10c0 1.1.9 1.99 2 1.99L16 19c.67 0 1.27-.33 1.63-.84L22 12l-4.37-6.16z" fill="#ebebff"/>
<text x="1201.5" y="685.6" textLength="101" lengthAdjust="spacingAndGlyphs" class="nr it">Pseudostate</text>
<path transform="translate(1176.13,697.75) scale(0.79)" d="M17.63 5.84C17.27 5.33 16.67 5 16 5L5 5.01C3.9 5.01 3 5.9 3 7v10c0 1.1.9 1.99 2 1.99L16 19c.67 0 1.27-.33 1.63-.84L22 12l-4.37-6.16z" fill="#ebebff"/>
<text x="1201.5" y="712.2" textLength="32" lengthAdjust="spacingAndGlyphs" class="nr">Exit</text>
<path d="M1166 637.5H1312" stroke="#ebebff" stroke-width="2" stroke-dasharray="5.5 3"/>
<path d="M1185 601H1293A19 19 0 0 1 1312 620V708A19 19 0 0 1 1293 727H1185A19 19 0 0 1 1166 708V620A19 19 0 0 1 1185 601Z" fill="none" stroke="#ebebff" stroke-width="2" stroke-dasharray="5.5 3"/>
<path d="M1358 601H1465A19 19 0 0 1 1484 620V708A19 19 0 0 1 1465 727H1358A19 19 0 0 1 1339 708V620A19 19 0 0 1 1358 601Z" fill="#282c34"/>
<path d="M1339 637.5V620A19 19 0 0 1 1358 601H1465A19 19 0 0 1 1484 620V637.5Z" fill="#ae8007"/>
<text x="1411.5" y="626" text-anchor="middle" textLength="106.6" lengthAdjust="spacingAndGlyphs" class="nt">Choice::new</text>
<path transform="translate(1349.13,646.35) scale(0.79)" d="M17.63 5.84C17.27 5.33 16.67 5 16 5L5 5.01C3.9 5.01 3 5.9 3 7v10c0 1.1.9 1.99 2 1.99L16 19c.67 0 1.27-.33 1.63-.84L22 12l-4.37-6.16z" fill="#ebebff"/>
<text x="1374.5" y="660.8" textLength="52" lengthAdjust="spacingAndGlyphs" class="nr it">Vertex</text>
<path transform="translate(1349.13,671.15) scale(0.79)" d="M17.63 5.84C17.27 5.33 16.67 5 16 5L5 5.01C3.9 5.01 3 5.9 3 7v10c0 1.1.9 1.99 2 1.99L16 19c.67 0 1.27-.33 1.63-.84L22 12l-4.37-6.16z" fill="#ebebff"/>
<text x="1374.5" y="685.6" textLength="101" lengthAdjust="spacingAndGlyphs" class="nr it">Pseudostate</text>
<path transform="translate(1349.13,697.75) scale(0.79)" d="M17.63 5.84C17.27 5.33 16.67 5 16 5L5 5.01C3.9 5.01 3 5.9 3 7v10c0 1.1.9 1.99 2 1.99L16 19c.67 0 1.27-.33 1.63-.84L22 12l-4.37-6.16z" fill="#ebebff"/>
<text x="1374.5" y="712.2" textLength="59" lengthAdjust="spacingAndGlyphs" class="nr">Choice</text>
<path d="M1339 637.5H1484" stroke="#ebebff" stroke-width="2"/>
<path d="M1358 601H1465A19 19 0 0 1 1484 620V708A19 19 0 0 1 1465 727H1358A19 19 0 0 1 1339 708V620A19 19 0 0 1 1358 601Z" fill="none" stroke="#ebebff" stroke-width="2"/>
<path d="M1530 601H1642A19 19 0 0 1 1661 620V708A19 19 0 0 1 1642 727H1530A19 19 0 0 1 1511 708V620A19 19 0 0 1 1530 601Z" fill="#282c34"/>
<path d="M1511 637.3V620A19 19 0 0 1 1530 601H1642A19 19 0 0 1 1661 620V637.3Z" fill="#854a9b"/>
<text x="1586.0" y="626" text-anchor="middle" textLength="134" lengthAdjust="spacingAndGlyphs" class="nt">FinalState::new</text>
<path transform="translate(1521.13,646.35) scale(0.79)" d="M17.63 5.84C17.27 5.33 16.67 5 16 5L5 5.01C3.9 5.01 3 5.9 3 7v10c0 1.1.9 1.99 2 1.99L16 19c.67 0 1.27-.33 1.63-.84L22 12l-4.37-6.16z" fill="#ebebff"/>
<text x="1546.5" y="660.8" textLength="52" lengthAdjust="spacingAndGlyphs" class="nr it">Vertex</text>
<path transform="translate(1521.13,671.15) scale(0.79)" d="M17.63 5.84C17.27 5.33 16.67 5 16 5L5 5.01C3.9 5.01 3 5.9 3 7v10c0 1.1.9 1.99 2 1.99L16 19c.67 0 1.27-.33 1.63-.84L22 12l-4.37-6.16z" fill="#ebebff"/>
<text x="1546.5" y="685.6" textLength="105" lengthAdjust="spacingAndGlyphs" class="nr it">RegularState</text>
<path transform="translate(1521.13,697.75) scale(0.79)" d="M17.63 5.84C17.27 5.33 16.67 5 16 5L5 5.01C3.9 5.01 3 5.9 3 7v10c0 1.1.9 1.99 2 1.99L16 19c.67 0 1.27-.33 1.63-.84L22 12l-4.37-6.16z" fill="#ebebff"/>
<text x="1546.5" y="712.2" textLength="86" lengthAdjust="spacingAndGlyphs" class="nr">FinalState</text>
<path d="M1511 637.3H1661" stroke="#ebebff" stroke-width="2" stroke-dasharray="5.5 3"/>
<path d="M1530 601H1642A19 19 0 0 1 1661 620V708A19 19 0 0 1 1642 727H1530A19 19 0 0 1 1511 708V620A19 19 0 0 1 1530 601Z" fill="none" stroke="#ebebff" stroke-width="2" stroke-dasharray="5.5 3"/>
<path d="M1707 589H1868A19 19 0 0 1 1887 608V721A19 19 0 0 1 1868 740H1707A19 19 0 0 1 1688 721V608A19 19 0 0 1 1707 589Z" fill="#282c34"/>
<path d="M1688 624.8V608A19 19 0 0 1 1707 589H1868A19 19 0 0 1 1887 608V624.8Z" fill="#a23c47"/>
<text x="1787.5" y="614" text-anchor="middle" textLength="93" lengthAdjust="spacingAndGlyphs" class="nt">State::new</text>
<path transform="translate(1698.13,633.85) scale(0.79)" d="M17.63 5.84C17.27 5.33 16.67 5 16 5L5 5.01C3.9 5.01 3 5.9 3 7v10c0 1.1.9 1.99 2 1.99L16 19c.67 0 1.27-.33 1.63-.84L22 12l-4.37-6.16z" fill="#ebebff"/>
<text x="1723.5" y="648.3" textLength="154" lengthAdjust="spacingAndGlyphs" class="nr it">CompositeElement</text>
<path transform="translate(1698.13,658.85) scale(0.79)" d="M17.63 5.84C17.27 5.33 16.67 5 16 5L5 5.01C3.9 5.01 3 5.9 3 7v10c0 1.1.9 1.99 2 1.99L16 19c.67 0 1.27-.33 1.63-.84L22 12l-4.37-6.16z" fill="#ebebff"/>
<text x="1723.5" y="673.3" textLength="51.6" lengthAdjust="spacingAndGlyphs" class="nr it">Vertex</text>
<path transform="translate(1698.13,683.85) scale(0.79)" d="M17.63 5.84C17.27 5.33 16.67 5 16 5L5 5.01C3.9 5.01 3 5.9 3 7v10c0 1.1.9 1.99 2 1.99L16 19c.67 0 1.27-.33 1.63-.84L22 12l-4.37-6.16z" fill="#ebebff"/>
<text x="1723.5" y="698.3" textLength="105" lengthAdjust="spacingAndGlyphs" class="nr it">RegularState</text>
<path transform="translate(1698.13,710.35) scale(0.79)" d="M17.63 5.84C17.27 5.33 16.67 5 16 5L5 5.01C3.9 5.01 3 5.9 3 7v10c0 1.1.9 1.99 2 1.99L16 19c.67 0 1.27-.33 1.63-.84L22 12l-4.37-6.16z" fill="#ebebff"/>
<text x="1723.5" y="724.8" textLength="44" lengthAdjust="spacingAndGlyphs" class="nr">State</text>
<path d="M1688 624.8H1887" stroke="#ebebff" stroke-width="2" stroke-dasharray="5.5 3"/>
<path d="M1707 589H1868A19 19 0 0 1 1887 608V721A19 19 0 0 1 1868 740H1707A19 19 0 0 1 1688 721V608A19 19 0 0 1 1707 589Z" fill="none" stroke="#ebebff" stroke-width="2" stroke-dasharray="5.5 3"/>
<path d="M1355 796H1469A19 19 0 0 1 1488 815V855A19 19 0 0 1 1469 874H1355A19 19 0 0 1 1336 855V815A19 19 0 0 1 1355 796Z" fill="#282c34"/>
<path d="M1336 833.7V815A19 19 0 0 1 1355 796H1469A19 19 0 0 1 1488 815V833.7Z" fill="#4e789c"/>
<text x="1412.0" y="821" text-anchor="middle" textLength="136" lengthAdjust="spacingAndGlyphs" class="nt">Transition::new</text>
<path transform="translate(1346.13,843.35) scale(0.79)" d="M17.63 5.84C17.27 5.33 16.67 5 16 5L5 5.01C3.9 5.01 3 5.9 3 7v10c0 1.1.9 1.99 2 1.99L16 19c.67 0 1.27-.33 1.63-.84L22 12l-4.37-6.16z" fill="#ebebff"/>
<text x="1371.5" y="857.8" textLength="92" lengthAdjust="spacingAndGlyphs" class="nr">Transition</text>
<path d="M1336 833.7H1488" stroke="#ebebff" stroke-width="2" stroke-dasharray="5.5 3"/>
<path d="M1355 796H1469A19 19 0 0 1 1488 815V855A19 19 0 0 1 1469 874H1355A19 19 0 0 1 1336 855V815A19 19 0 0 1 1355 796Z" fill="none" stroke="#ebebff" stroke-width="2" stroke-dasharray="5.5 3"/>
</svg>
</div></body></html>
